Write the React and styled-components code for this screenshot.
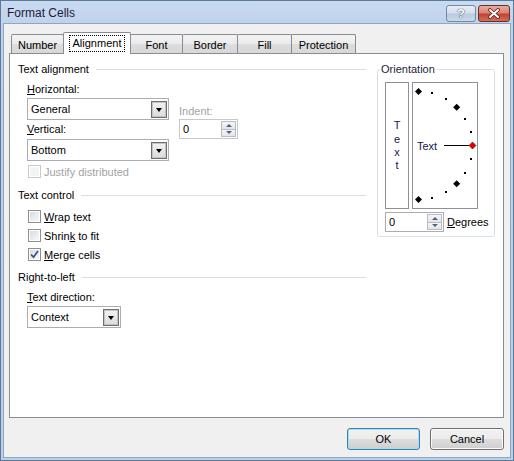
import React from "react";
import styled, { createGlobalStyle, css } from "styled-components";

const GlobalStyle = createGlobalStyle`
  html, body {
    margin: 0;
    padding: 0;
    background: #ffffff;
  }
  body {
    font-family: "Liberation Sans", Arial, sans-serif;
    font-size: 11px;
    color: #000;
  }
  * {
    box-sizing: border-box;
  }
`;

// window chrome
const Window = styled.div`
  width: 514px;
  height: 461px;
  display: flex;
  flex-direction: column;
  border: 1px solid #5b7a9e;
  background: linear-gradient(to bottom, #c9dbef 0, #bed2e9 24px, #bad0e8 100%);
`;

const TitleBar = styled.div`
  height: 22px;
  flex-shrink: 0;
  display: flex;
  align-items: center;
  padding: 2px 3px 0 6px;
`;

const Title = styled.div`
  flex: 1;
  font-size: 12px;
  color: #1d1a3c;
`;

const CaptionButton = styled.div`
  width: ${({ $close }) => ($close ? 32 : 30)}px;
  height: 17px;
  margin-left: 2px;
  border-radius: 3px;
  display: flex;
  align-items: center;
  justify-content: center;
  font-size: 13px;
  font-weight: bold;
  color: #fff;
  text-shadow: 0 0 1px #2c3a50, 0 0 1px #2c3a50;
  ${({ $close }) =>
    $close
      ? css`
          border: 1px solid #6f2b24;
          background: linear-gradient(to bottom, #e9ab9f 0, #d98576 45%, #c4432f 55%, #d0705a 100%);
        `
      : css`
          border: 1px solid #7589a6;
          background: linear-gradient(to bottom, #e6eef7 0, #d3e0ee 45%, #b9cbe0 55%, #cbd9ea 100%);
        `}
`;

const Client = styled.div`
  flex: 1;
  margin: 0 2px 2px;
  border: 1px solid #8fa6c1;
  background: #f0f0f0;
  display: flex;
  flex-direction: column;
  padding-top: 8px;
`;

// tabs
const TabRow = styled.div`
  height: 21px;
  display: flex;
  align-items: flex-end;
  padding-left: 7px;
`;

const Tab = styled.div`
  width: ${({ $w }) => $w}px;
  margin-left: ${({ $first }) => ($first ? 0 : -1)}px;
  border: 1px solid #898c95;
  border-bottom: none;
  border-radius: 2px 2px 0 0;
  display: flex;
  justify-content: center;
  align-items: center;
  ${({ $active }) =>
    $active
      ? css`
          position: relative;
          z-index: 1;
          height: 22px;
          margin-bottom: -1px;
          background: #ffffff;
          padding-bottom: 1px;
        `
      : css`
          height: 19px;
          padding-top: 1px;
          background: linear-gradient(to bottom, #f3f3f3 0, #ebebeb 50%, #dddddd 51%, #d8d8d8 100%);
        `}
`;

const FocusLabel = styled.span`
  border: 1px dotted #000;
  padding: 1px 3px;
  line-height: 13px;
`;

const Panel = styled.div`
  height: 365px;
  margin: 0 6px 0 5px;
  border: 1px solid #898c95;
  background: #ffffff;
  display: flex;
  gap: 11px;
  padding: 8px 0 0 8px;
`;

const LeftColumn = styled.div`
  width: 348px;
  display: flex;
  flex-direction: column;
`;

const SectionHeader = styled.div`
  height: 14px;
  line-height: 14px;
  margin-top: ${({ $top }) => $top || 0}px;
  display: flex;
  align-items: center;
  gap: 7px;
  white-space: nowrap;
  &::after {
    content: "";
    flex: 1;
    border-top: 1px solid #d5dfe5;
  }
`;

const FieldLabel = styled.div`
  height: 14px;
  line-height: 14px;
  margin-top: ${({ $top }) => $top || 0}px;
  padding-left: ${({ $indent }) => ($indent === undefined ? 9 : $indent)}px;
  color: ${({ $disabled }) => ($disabled ? "#a3a3a3" : "#000")};
`;

const Key = styled.span`
  text-decoration: underline;
  text-underline-offset: 1px;
`;

const Row = styled.div`
  display: flex;
  margin-top: ${({ $top }) => $top || 0}px;
`;

const Column = styled.div`
  display: flex;
  flex-direction: column;
  padding-top: ${({ $top }) => $top || 0}px;
  margin-left: ${({ $left }) => $left || 0}px;
`;

// combo box
const Combo = styled.div`
  width: ${({ $w }) => $w}px;
  height: 22px;
  margin-top: ${({ $top }) => $top || 0}px;
  margin-left: 9px;
  border: 1px solid #abadb3;
  background: #fff;
  display: flex;
  align-items: center;
  justify-content: space-between;
  padding: 0 1px 0 3px;
`;

const DropButton = styled.div`
  width: 16px;
  height: 17px;
  border: 1px solid #6f6f6f;
  box-shadow: inset 0 0 0 1px #c4c4c4;
  background: linear-gradient(to bottom, #f2f2f2, #dcdcdc);
  display: flex;
  align-items: center;
  justify-content: center;
  &::after {
    content: "";
    border-left: 3.5px solid transparent;
    border-right: 3.5px solid transparent;
    border-top: 4px solid #000;
    margin-top: 1px;
  }
`;

// spin box
const SpinBox = styled.div`
  width: 59px;
  height: 20px;
  border: 1px solid ${({ $disabled }) => ($disabled ? "#c6c8cc" : "#abadb3")};
  background: #fff;
  display: flex;
  align-items: center;
  justify-content: space-between;
  padding: 0 1px 0 3px;
`;

const SpinButtons = styled.div`
  width: 15px;
  height: 16px;
  display: flex;
  flex-direction: column;
`;

const SpinButton = styled.div`
  flex: 1;
  border: 1px solid #b9bcc2;
  margin-top: ${({ $down }) => ($down ? -1 : 0)}px;
  background: linear-gradient(to bottom, #f6f6f6, #e2e4e8);
  display: flex;
  align-items: center;
  justify-content: center;
  &::after {
    content: "";
    border-left: 3px solid transparent;
    border-right: 3px solid transparent;
    ${({ $down }) =>
      $down
        ? css`border-top: 3px solid #4d6089;`
        : css`border-bottom: 3px solid #4d6089;`}
  }
`;

// checkbox
const CheckRow = styled.div`
  height: 19px;
  margin-top: ${({ $top }) => $top || 0}px;
  display: flex;
  align-items: center;
  gap: 3px;
  padding-left: 10px;
  color: ${({ $disabled }) => ($disabled ? "#a3a3a3" : "#000")};
`;

const Box = styled.div`
  width: 13px;
  height: 13px;
  border: 1px solid ${({ $disabled }) => ($disabled ? "#c9c9c9" : "#8e8f8f")};
  box-shadow: inset 0 0 0 1px #fff;
  background: ${({ $disabled }) =>
    $disabled ? "#f4f4f4" : "linear-gradient(135deg, #d4d7dc 0, #eceef0 60%, #fafafa 100%)"};
  display: flex;
  align-items: center;
  justify-content: center;
`;

// orientation
const Group = styled.fieldset`
  margin: 0;
  padding: 0 0 4px 0;
  width: 118px;
  height: 175px;
  border: 1px solid #d5dfe5;
  border-radius: 3px;
  min-inline-size: 0;
`;

const Legend = styled.legend`
  margin-left: 2px;
  padding: 0 1px;
  line-height: 14px;
  height: 14px;
  color: #1b1d40;
`;

const GroupBody = styled.div`
  padding: 6px 0 0 7px;
`;

const DialRow = styled.div`
  height: 127px;
  display: flex;
  gap: 3px;
`;

const VerticalText = styled.div`
  width: 24px;
  border: 1px solid #8e9298;
  display: flex;
  flex-direction: column;
  align-items: center;
  justify-content: center;
  padding-top: 1px;
  color: #16174f;
  line-height: 13.4px;
`;

const Dial = styled.div`
  width: 66px;
  border: 1px solid #8e9298;
  display: flex;
`;

const DegreesRow = styled.div`
  height: 20px;
  margin-top: 3px;
  display: flex;
  align-items: center;
  gap: 3px;
`;

// footer
const Footer = styled.div`
  display: flex;
  justify-content: flex-end;
  gap: 10px;
  padding: 10px 6px 0 0;
`;

const Button = styled.div`
  width: ${({ $w }) => $w}px;
  height: 22px;
  border-radius: 3px;
  border: 1px solid ${({ $default }) => ($default ? "#3c7fb1" : "#707070")};
  box-shadow: inset 0 0 0 1px ${({ $default }) => ($default ? "#a9dcf4" : "#fbfbfb")};
  background: linear-gradient(to bottom, #f2f2f2 0, #ebebeb 50%, #dddddd 51%, #cfcfcf 100%);
  display: flex;
  align-items: center;
  justify-content: center;
`;

const ticks = Array.from({ length: 13 }, (_, i) => 90 - i * 15);

const DialDrawing = () => (
  <svg width="64" height="125" viewBox="0 0 64 125">
    {ticks.map((deg) => {
      const r = (deg * Math.PI) / 180;
      const x = 5.5 + 54 * Math.cos(r);
      const y = 62.5 - 54 * Math.sin(r);
      if (deg % 45 === 0) {
        const red = deg === 0;
        return (
          <polygon
            key={deg}
            points={`${x},${y - 3.5} ${x + 3.5},${y} ${x},${y + 3.5} ${x - 3.5},${y}`}
            fill={red ? "#e00000" : "#000"}
            stroke={red ? "#7a0000" : "none"}
            strokeWidth="0.6"
          />
        );
      }
      return <rect key={deg} x={Math.round(x) - 1} y={Math.round(y) - 1} width="2" height="2" fill="#000" />;
    })}
    <line x1="31" y1="62.5" x2="56" y2="62.5" stroke="#000" strokeWidth="1" />
    <text x="4" y="66.5" fontSize="11" fontFamily="Liberation Sans, Arial, sans-serif" fill="#16174f">
      Text
    </text>
  </svg>
);

const CloseGlyph = () => (
  <svg width="14" height="11" viewBox="0 0 14 11">
    <path d="M3 2 L11 9 M11 2 L3 9" stroke="#5a1f18" strokeWidth="3.6" strokeLinecap="round" />
    <path d="M3 2 L11 9 M11 2 L3 9" stroke="#fff" strokeWidth="2" strokeLinecap="round" />
  </svg>
);

const CheckGlyph = () => (
  <svg width="9" height="9" viewBox="0 0 9 9">
    <path d="M1 4.5 L3.5 7.2 L8 1" fill="none" stroke="#3b4f8e" strokeWidth="1.7" />
  </svg>
);

const tabs = [
  { label: "Number", w: 53 },
  { label: "Alignment", w: 68, active: true },
  { label: "Font", w: 53 },
  { label: "Border", w: 56 },
  { label: "Fill", w: 55 },
  { label: "Protection", w: 65 },
];

const App = () => {
  return (
    <>
      <GlobalStyle />
      <Window>
        <TitleBar>
          <Title>Format Cells</Title>
          <CaptionButton>?</CaptionButton>
          <CaptionButton $close>
            <CloseGlyph />
          </CaptionButton>
        </TitleBar>
        <Client>
          <TabRow>
            {tabs.map((t, i) => (
              <Tab key={t.label} $w={t.w} $first={i === 0} $active={t.active}>
                {t.active ? <FocusLabel>{t.label}</FocusLabel> : t.label}
              </Tab>
            ))}
          </TabRow>
          <Panel>
            <LeftColumn>
              <SectionHeader>Text alignment</SectionHeader>
              <FieldLabel $top={6}>
                <Key>H</Key>orizontal:
              </FieldLabel>
              <Row $top={2}>
                <Column>
                  <Combo $w={142}>
                    General
                    <DropButton />
                  </Combo>
                  <FieldLabel $top={2}>
                    <Key>V</Key>ertical:
                  </FieldLabel>
                  <Combo $w={142} $top={3}>
                    Bottom
                    <DropButton />
                  </Combo>
                </Column>
                <Column $top={6} $left={10}>
                  <FieldLabel $indent={0} $disabled>
                    Indent:
                  </FieldLabel>
                  <Row $top={1}>
                    <SpinBox $disabled>
                      0
                      <SpinButtons>
                        <SpinButton />
                        <SpinButton $down />
                      </SpinButtons>
                    </SpinBox>
                  </Row>
                </Column>
              </Row>
              <CheckRow $top={1} $disabled>
                <Box $disabled />
                Justify distributed
              </CheckRow>

              <SectionHeader $top={7}>Text control</SectionHeader>
              <CheckRow $top={5}>
                <Box />
                <span>
                  <Key>W</Key>rap text
                </span>
              </CheckRow>
              <CheckRow>
                <Box />
                <span>
                  Shrin<Key>k</Key> to fit
                </span>
              </CheckRow>
              <CheckRow>
                <Box>
                  <CheckGlyph />
                </Box>
                <span>
                  <Key>M</Key>erge cells
                </span>
              </CheckRow>

              <SectionHeader $top={6}>Right-to-left</SectionHeader>
              <FieldLabel $top={6}>
                <Key>T</Key>ext direction:
              </FieldLabel>
              <Combo $w={94} $top={2}>
                Context
                <DropButton />
              </Combo>
            </LeftColumn>

            <Group>
              <Legend>Orientation</Legend>
              <GroupBody>
                <DialRow>
                  <VerticalText>
                    <span>T</span>
                    <span>e</span>
                    <span>x</span>
                    <span>t</span>
                  </VerticalText>
                  <Dial>
                    <DialDrawing />
                  </Dial>
                </DialRow>
                <DegreesRow>
                  <SpinBox>
                    0
                    <SpinButtons>
                      <SpinButton />
                      <SpinButton $down />
                    </SpinButtons>
                  </SpinBox>
                  <span>
                    <Key>D</Key>egrees
                  </span>
                </DegreesRow>
              </GroupBody>
            </Group>
          </Panel>
          <Footer>
            <Button $w={73} $default>
              OK
            </Button>
            <Button $w={74}>Cancel</Button>
          </Footer>
        </Client>
      </Window>
    </>
  );
};

export default App;
